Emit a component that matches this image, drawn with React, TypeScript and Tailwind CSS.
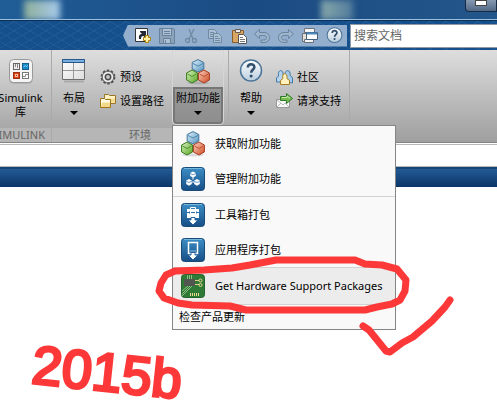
import type { ReactNode } from 'react'

const Cubes = () => (
  <svg className="shrink-0" width="24" height="26" viewBox="0 0 24 26">
    <defs>
      <linearGradient id="cubeBlue" x2="1" y2="1"><stop stopColor="#e0f1fa" /><stop offset="1" stopColor="#5593be" /></linearGradient>
      <linearGradient id="cubeGreen" x2="1" y2="1"><stop stopColor="#dcf2c5" /><stop offset="1" stopColor="#56a51f" /></linearGradient>
      <linearGradient id="cubeRed" x2="1" y2="1"><stop stopColor="#f9d4c4" /><stop offset="1" stopColor="#d04a20" /></linearGradient>
    </defs>
    <ellipse cx="12" cy="24" rx="11" ry="1.5" fill="#000" opacity=".12" />
    <path d="M12 .6 17.800 3.500V10L12 13 6.200 10V3.500Z" fill="url(#cubeBlue)" stroke="#3d759d" />
    <path d="M7 4.500 12 7l5-2.500" fill="none" stroke="#4d87ad" />
    <path d="M6 11 11.600 14v7L6 24 .6 21v-7Z" fill="url(#cubeGreen)" stroke="#397b1d" />
    <path d="M1.500 15 6 17.500l4.500-2.500" fill="none" stroke="#4d932a" />
    <path d="M18 11 23.400 14v7L18 24l-5.600-3v-7Z" fill="url(#cubeRed)" stroke="#a83c22" />
    <path d="M13.500 15 18 17.500l4.500-2.500" fill="none" stroke="#c25233" />
  </svg>
)

const SimulinkIcon = () => (
  <svg width="24" height="26" viewBox="0 0 24 26">
    <rect x=".5" y="1.500" width="23" height="23" rx="4" fill="#777" opacity=".5" />
    <rect x=".5" y=".5" width="23" height="23" rx="4" fill="#f4f4f4" stroke="#999" />
    <rect x="4.500" y="4.500" width="6" height="6" fill="#eee" stroke="#666" />
    <path d="M6.500 5v3m2-3v4" stroke="#888" />
    <rect x="13.500" y="4.500" width="6" height="6" fill="#168bc8" stroke="#17618f" />
    <path d="m14.500 8 2-1.500 1 1 1.500-1" fill="none" stroke="#8fd7f6" />
    <rect x="4.500" y="13.500" width="6" height="6" fill="#d7461b" stroke="#9f3015" />
    <rect x="6.500" y="15.500" width="2" height="2" fill="#b83311" stroke="#f7b89c" />
    <rect x="13.500" y="13.500" width="6" height="6" fill="#fff" stroke="#777" />
    <path d="M14 17.500h2.500V15.500H19" fill="none" stroke="#888" />
  </svg>
)

const LayoutIcon = () => (
  <svg width="24" height="26" viewBox="0 0 24 26">
    <defs><linearGradient id="pane" x2="1" y2="1"><stop stopColor="#fff" /><stop offset="1" stopColor="#ddd" /></linearGradient></defs>
    <path d="M2 22.500h20" stroke="#000" strokeWidth="2" opacity=".15" />
    <path d="M.5.500h22v20H.5Z" fill="url(#pane)" stroke="#6e6e6e" />
    <path d="M.5.500h22v3H.5Z" fill="#76aee0" stroke="#285789" />
    <path d="M11.500 4v16M1 11.500h21" stroke="#999" />
  </svg>
)

const HelpIcon = ({ size }: { size: number }) => (
  <svg width={size} height={size} viewBox="0 0 24 24">
    <defs><linearGradient id="helpBall" x2="0" y2="1"><stop stopColor="#fff" /><stop offset="1" stopColor="#b9cddd" /></linearGradient></defs>
    <circle cx="12" cy="11.500" r="10.500" fill="url(#helpBall)" stroke="#4a7499" strokeWidth="1.500" />
    <path d="M8.800 8.500c0-4.500 6.700-4.200 6.600-.4 0 2.700-3.200 2.700-3.200 5.600" fill="none" stroke="#304f6c" strokeWidth="2.500" />
    <circle cx="12.100" cy="17" r="1.500" fill="#304f6c" />
  </svg>
)

const GearIcon = () => (
  <svg width="16" height="16" viewBox="0 0 16 16">
    <circle cx="8" cy="8" r="6.300" fill="none" stroke="#4f4f4f" strokeWidth="2.200" strokeDasharray="2.500 1.450" />
    <circle cx="8" cy="8" r="4.500" fill="none" stroke="#eee" strokeWidth="2.600" />
    <circle cx="8" cy="8" r="5.700" fill="none" stroke="#666" />
    <circle cx="8" cy="8" r="2.700" fill="#c6c6c6" stroke="#4a4a4a" strokeWidth="1.500" />
  </svg>
)

const FoldersIcon = () => (
  <svg width="16" height="16" viewBox="0 0 16 16">
    <path d="M4.500 10.500v-9h4l1 1h6v8Z" fill="#fff3c5" stroke="#9b7425" />
    <path d="M7 5.500h8v4H7Z" fill="#f5dc93" />
    <path d="M.5 14.500v-9h4l1 1h5v8Z" fill="#fffbe5" stroke="#a17419" />
    <path d="M2 9.500h8V14H1Z" fill="#f3d98a" />
  </svg>
)

const CommunityIcon = () => (
  <svg width="17" height="16" viewBox="0 0 17 16">
    <path d="M.5 13V9l2-2C1 0 8 0 7 6l2 2v5Z" fill="#b5d4ec" stroke="#4679a7" />
    <path d="M9 13V7C8 0 15 0 14 6l2.500 3v5Z" fill="#a6cae5" stroke="#4679a7" />
    <path d="M4.500 15.500v-4L7 9.500C5 3 12 3 11 9.500l2.500 2v4Z" fill="#fff2be" stroke="#aa7b22" />
  </svg>
)

const RequestIcon = () => (
  <svg width="17" height="16" viewBox="0 0 17 16">
    <path d="M.5 6.500h13v8H.5Z" fill="#fafafa" stroke="#999" />
    <path d="m1 14 4-4m8 4-4-4M1 7l6 5 6-5" fill="none" stroke="#bbb" />
    <path d="M4.500 7.500v-4h6v-3l6 5-6 5v-3Z" fill="#75bd50" stroke="#32792a" />
    <path d="M6 4.500h5V3l3 2.500" fill="none" stroke="#c6e7ae" />
  </svg>
)

const Chevron = () => (
  <svg width="8" height="4" viewBox="0 0 8 4"><path d="M0 0h8L4 4Z" fill="#000" /></svg>
)

const BlueTile = ({ children }: { children: ReactNode }) => (
  <svg className="shrink-0" width="24" height="24" viewBox="0 0 24 24">
    <defs><linearGradient id="tile" x2="0" y2="1"><stop stopColor="#3d8ec5" /><stop offset="1" stopColor="#174e87" /></linearGradient></defs>
    <rect x=".5" y=".5" width="23" height="23" rx="3" fill="url(#tile)" stroke="#184b78" />
    <path d="M3 1.500h18" stroke="#75b6dc" />
    {children}
  </svg>
)

const ManageIcon = () => (
  <BlueTile>
    <g fill="#fff">
      <path d="m12 4.500 2.800 1.500v3L12 10.500 9.200 9V6Z" />
      <path d="m8 12 2.800 1.500v3.500L8 18.700 5.200 17v-3.500Z" />
      <path d="m16 12 2.800 1.500v3.500L16 18.700 13.200 17v-3.500Z" />
    </g>
    <path d="M9.200 6.500 12 7.800l2.800-1.300M5.200 14.200 8 15.500l2.800-1.300m2.400 0 2.800 1.300 2.800-1.300" fill="none" stroke="#2b74aa" strokeWidth=".7" />
    <path d="M12 10v2.500M11 15h2" stroke="#fff" />
  </BlueTile>
)

const ToolboxIcon = () => (
  <BlueTile>
    <path d="M9.500 6V4.500h5V6" fill="none" stroke="#fff" />
    <path d="M6 6h12v9h-4v-1h-4v1H6Z" fill="#fff" />
    <path d="M6 9.500h2m2 0h4m2 0h2" stroke="#286da8" />
    <path d="M8.500 8.500v2m7-2v2" stroke="#286da8" />
    <path d="M10 14.500h4v2.500h3l-5 5-5-5h3Z" fill="#fff" stroke="#2564a0" />
  </BlueTile>
)

const AppIcon = () => (
  <BlueTile>
    <rect x="7.500" y="4.500" width="9" height="11" fill="none" stroke="#fff" strokeWidth="1.500" />
    <path d="M9 13h6" stroke="#86bce0" />
    <path d="M10 14.500h4v2.500h3l-5 5-5-5h3Z" fill="#fff" stroke="#2564a0" />
  </BlueTile>
)

const BoardIcon = () => (
  <svg className="shrink-0" width="24" height="24" viewBox="0 0 24 24">
    <rect x=".5" y=".5" width="23" height="23" rx="3" fill="#2f7a37" stroke="#25632d" />
    <path d="M6.500 1v4m2-4v4m2-4v4M1 17l6-5m-6 8 8-8M1 22l10-10" stroke="#8bbf85" />
    <path d="M13 6.500h5m-5 4h5" stroke="#dbce86" />
    <rect x="3" y="5" width="11" height="7" fill="#515651" />
    <g fill="none" stroke="#e9d990"><circle cx="19.500" cy="6.500" r="1.500" /><circle cx="19.500" cy="11" r="1.500" /></g>
    <path d="M9.500 19v3m2-3v3m2-3v3m2-3v3m2-3v3" stroke="#eadb8c" />
  </svg>
)

const quickActions = [
  {
    label: '新建快捷方式',
    icon: (
      <>
        <path d="M.5.500h12v13H.5Z" fill="#fff" stroke="#343434" />
        <path d="M4 11c-.5-4 1-5 3-5L5 4V3h6v6H9.500L8.500 8C6.500 8 6 9 6 11Z" fill="#222b35" />
        <path d="M10.500 9.500v-2h3v2h2v3h-2v2h-3v-2h-2v-3Z" fill="#fff1a5" stroke="#b18411" />
      </>
    ),
  },
  {
    label: '保存',
    icon: (
      <g fill="#8ba2b8" stroke="#66819b">
        <path d="M.5.500h14l1 1v14H.5Z" />
        <path d="M3.500.500h9v7h-9Zm1 10h7v5h-7Z" fill="#afc2d4" />
        <path d="M5 3.500h6m-6 2h6M6.500 12v3" />
      </g>
    ),
  },
  {
    label: '剪切',
    icon: (
      <g fill="none" stroke="#708aa3" strokeWidth="1.300">
        <path d="m6 1 4 10m1-10L6 11" />
        <circle cx="4.500" cy="12.500" r="2" /><circle cx="11.500" cy="12.500" r="2" />
      </g>
    ),
  },
  {
    label: '复制',
    icon: (
      <g fill="#a9bfd4" stroke="#708aa3">
        <path d="M1.500 1.500h6l2 2v7h-8Z" /><path d="M3 4.500h4m-4 2h4m-4 2h4" />
        <path d="M6.500 5.500h5l3 3v6h-8Z" /><path d="M8 8.500h3m-3 2h5m-5 2h5" />
      </g>
    ),
  },
  {
    label: '粘贴',
    icon: (
      <>
        <path d="M1.500 2.500h11v12h-11Z" fill="#d9a663" stroke="#895d2b" />
        <path d="M4.500 4.500v-3h5v3Z" fill="#eee" stroke="#655d51" />
        <path d="M7.500 6.500h5l3 3v6h-8Z" fill="#fff" stroke="#555" />
        <path d="M9 9.500h3m-3 2h5m-5 2h5" stroke="#777" />
      </>
    ),
  },
  {
    label: '撤消',
    icon: <path d="m.5 6 5-4.500V4.500H10c7.500 0 7.500 10 0 10H7V12h3c3.500 0 3.500-4.500 0-4.500H5.500v3Z" fill="#9fb6cc" stroke="#68849f" />,
  },
  {
    label: '重做',
    icon: <path d="m15.500 6-5-4.500V4.500H6c-7.500 0-7.500 10 0 10h3V12H6c-3.500 0-3.500-4.500 0-4.500h4.500v3Z" fill="#9fb6cc" stroke="#68849f" />,
  },
  {
    label: '切换窗口',
    icon: (
      <g stroke="#68717c">
        <path d="M2.500.500h10v4h-10Z" fill="#f4f4f4" />
        <path d="M.5 5.500h9v8h-9Z" fill="#e4e0d4" />
        <path d="M2.500 11.500h9v3h-9Z" fill="#f4f4f4" />
        <path d="M4.500 4.500h11v7h-11Z" fill="#fff" stroke="#44617e" />
        <path d="M5 5.500h10" stroke="#4b89be" strokeWidth="2" />
      </g>
    ),
  },
]

const menuItems = [
  { label: '获取附加功能', icon: <Cubes /> },
  { label: '管理附加功能', icon: <ManageIcon /> },
  { label: '工具箱打包', icon: <ToolboxIcon />, divided: true },
  { label: '应用程序打包', icon: <AppIcon /> },
]

const AddOnsMenu = () => (
  <div role="menu" className="absolute left-0 top-full z-10 flex w-56 flex-col border border-[#858585] bg-[#f9f9f9]">
    {menuItems.map((item) => (
      <button
        key={item.label}
        role="menuitem"
        className={`flex items-center gap-2.5 px-2 text-left ${item.divided ? 'h-9 border-t border-[#d2d2d2]' : 'h-[35px]'}`}
      >
        {item.icon}
        {item.label}
      </button>
    ))}
    <button role="menuitem" className="flex h-[38px] items-center gap-2.5 whitespace-nowrap border-y border-[#d2d2d2] bg-[#ececec] px-2 text-left">
      <BoardIcon />
      Get Hardware Support Packages
    </button>
    <button role="menuitem" className="flex h-6 items-center px-1.5 text-left">检查产品更新</button>
  </div>
)

const TitleBar = () => (
  <div className="flex h-5 justify-between overflow-hidden border-b border-[#9ac0dc] bg-linear-to-r from-[#205d96] via-[#1b4b83] to-[#23568a] pl-6">
    <span className="h-5 w-9 bg-linear-to-r from-[#8eae98] to-[#a9cbed] blur-[3px]" />
    <div className="flex gap-28">
      <span className="h-5 w-8 bg-linear-to-r from-[#86a7a9] to-[#527b9c] blur-[3px]" />
      <button aria-label="最小化" className="flex h-3 w-8 items-start justify-center rounded-bl border border-t-0 border-[#182b44] bg-linear-to-b from-[#879ab3] to-[#526986]">
        <span className="h-1.5 w-3 border border-[#444] bg-white" />
      </button>
    </div>
  </div>
)

const QuickAccess = () => (
  <div className="flex h-[30px] items-center justify-end gap-[3px] border-t border-[#0b315b] bg-[#15508d] bg-[repeating-linear-gradient(30deg,transparent_0_7px,#34699b55_7px_8px),repeating-linear-gradient(150deg,transparent_0_7px,#34699b55_7px_8px)]">
    <div className="flex h-[22px] w-56 items-center justify-between bg-[#93afcd] pl-3 pr-1 [clip-path:polygon(5px_0,100%_0,100%_100%,5px_100%,0_50%)]">
      {quickActions.map((action) => (
        <button key={action.label} aria-label={action.label}>
          <svg width="16" height="16" viewBox="0 0 16 16">{action.icon}</svg>
        </button>
      ))}
      <button aria-label="帮助"><HelpIcon size={17} /></button>
    </div>
    <input
      aria-label="搜索文档"
      placeholder="搜索文档"
      className="h-6 w-[147px] border border-r-0 border-[#909ba7] bg-white px-[3px] text-xs placeholder:text-[#666]"
    />
  </div>
)

const GroupLabel = ({ children }: { children: ReactNode }) => (
  <div className="flex h-3.5 items-center justify-center bg-[#b6b6b6] text-[#666]">{children}</div>
)

const Ribbon = () => (
  <div className="flex h-[93px] border-b border-[#858585] bg-linear-to-b from-[#dedede] to-[#9f9f9f] leading-[14px]">
    <section className="flex w-[52px] flex-col border-r border-[#aaa]">
      <button className="flex w-[41px] flex-1 flex-col items-center pt-[9px]">
        <SimulinkIcon />
        <span className="mt-1.5">Simulink</span>
        <span>库</span>
      </button>
      <div className="flex h-3.5 items-center justify-end overflow-hidden bg-[#b6b6b6] pr-1.5 text-[#666]">SIMULINK</div>
    </section>

    <section className="flex w-[177px] flex-col border-r border-[#aaa]">
      <div className="flex flex-1">
        <button className="flex w-11 flex-col items-center gap-1.5 pt-[9px]">
          <LayoutIcon />
          <span>布局</span>
          <Chevron />
        </button>
        <div className="flex flex-1 flex-col gap-2 pl-1 pt-[19px]">
          <button className="flex h-4 items-center gap-1 whitespace-nowrap"><GearIcon />预设</button>
          <button className="flex h-4 items-center gap-1 whitespace-nowrap"><FoldersIcon />设置路径</button>
        </div>
        <div className="relative mr-1 h-[75px] w-[52px]">
          <button aria-expanded="true" className="flex h-full w-full flex-col items-center rounded-b border border-[#d5d5d5]">
            <span className="flex h-9 items-end pb-0.5"><Cubes /></span>
            <span className="flex w-full flex-1 flex-col items-center gap-1.5 rounded-b border-2 border-[#777] bg-linear-to-b from-[#999] to-[#8e8e8e] pt-0.5">
              附加功能
              <Chevron />
            </span>
          </button>
          <AddOnsMenu />
        </div>
      </div>
      <GroupLabel>环境</GroupLabel>
    </section>

    <section className="flex w-[121px] flex-col border-r border-[#aaa]">
      <div className="flex flex-1">
        <button className="flex w-11 flex-col items-center gap-1.5 pt-[9px]">
          <span className="h-[26px]"><HelpIcon size={24} /></span>
          <span>帮助</span>
          <Chevron />
        </button>
        <div className="flex flex-col gap-2 pl-[3px] pt-[19px]">
          <button className="flex h-4 items-center gap-1 whitespace-nowrap"><CommunityIcon />社区</button>
          <button className="flex h-4 items-center gap-1 whitespace-nowrap"><RequestIcon />请求支持</button>
        </div>
      </div>
      <div className="h-3.5 bg-[#b6b6b6]" />
    </section>
  </div>
)

const MarkerStrokes = () => (
  <svg
    className="pointer-events-none absolute left-0 top-0 z-20"
    width="497"
    height="410"
    viewBox="0 0 497 410"
    fill="none"
    stroke="#fd3838"
    strokeLinecap="round"
    strokeLinejoin="round"
    strokeWidth="7"
  >
    <path d="M355 260H276L250 265 232 268 204 270 175 271 166 275 161 283 159 291 164 298 178 303 192 305 230 306 246 310H365L377 307 392 304 400 300 405 291 406 280 397 269 382 265 365 264 355 260" />
    <path d="m363 326 6 4 13 16 4 5 4 1 12-9 11-6 19-16 13-14 5-7" />
  </svg>
)

export default function App() {
  return (
    <div className="relative min-h-screen overflow-hidden bg-white font-['Noto_Sans','Noto_Sans_CJK_SC',sans-serif] text-[11px] text-black">
      <TitleBar />
      <QuickAccess />
      <Ribbon />
      <div className="mt-px h-[23px] border-y border-[#b8b8b8]" />
      <div className="h-5 border-t-2 border-[#164576] bg-linear-to-b from-[#235b95] to-[#0b3568]" />
      <p className="ml-8 mt-[158px] w-fit rotate-6 font-['Liberation_Sans',sans-serif] text-[54px] leading-[54px] text-[#fd3838] [-webkit-text-stroke:3px_#fd3838] [stroke-linejoin:round]">
        2015b
      </p>
      <MarkerStrokes />
    </div>
  )
}
